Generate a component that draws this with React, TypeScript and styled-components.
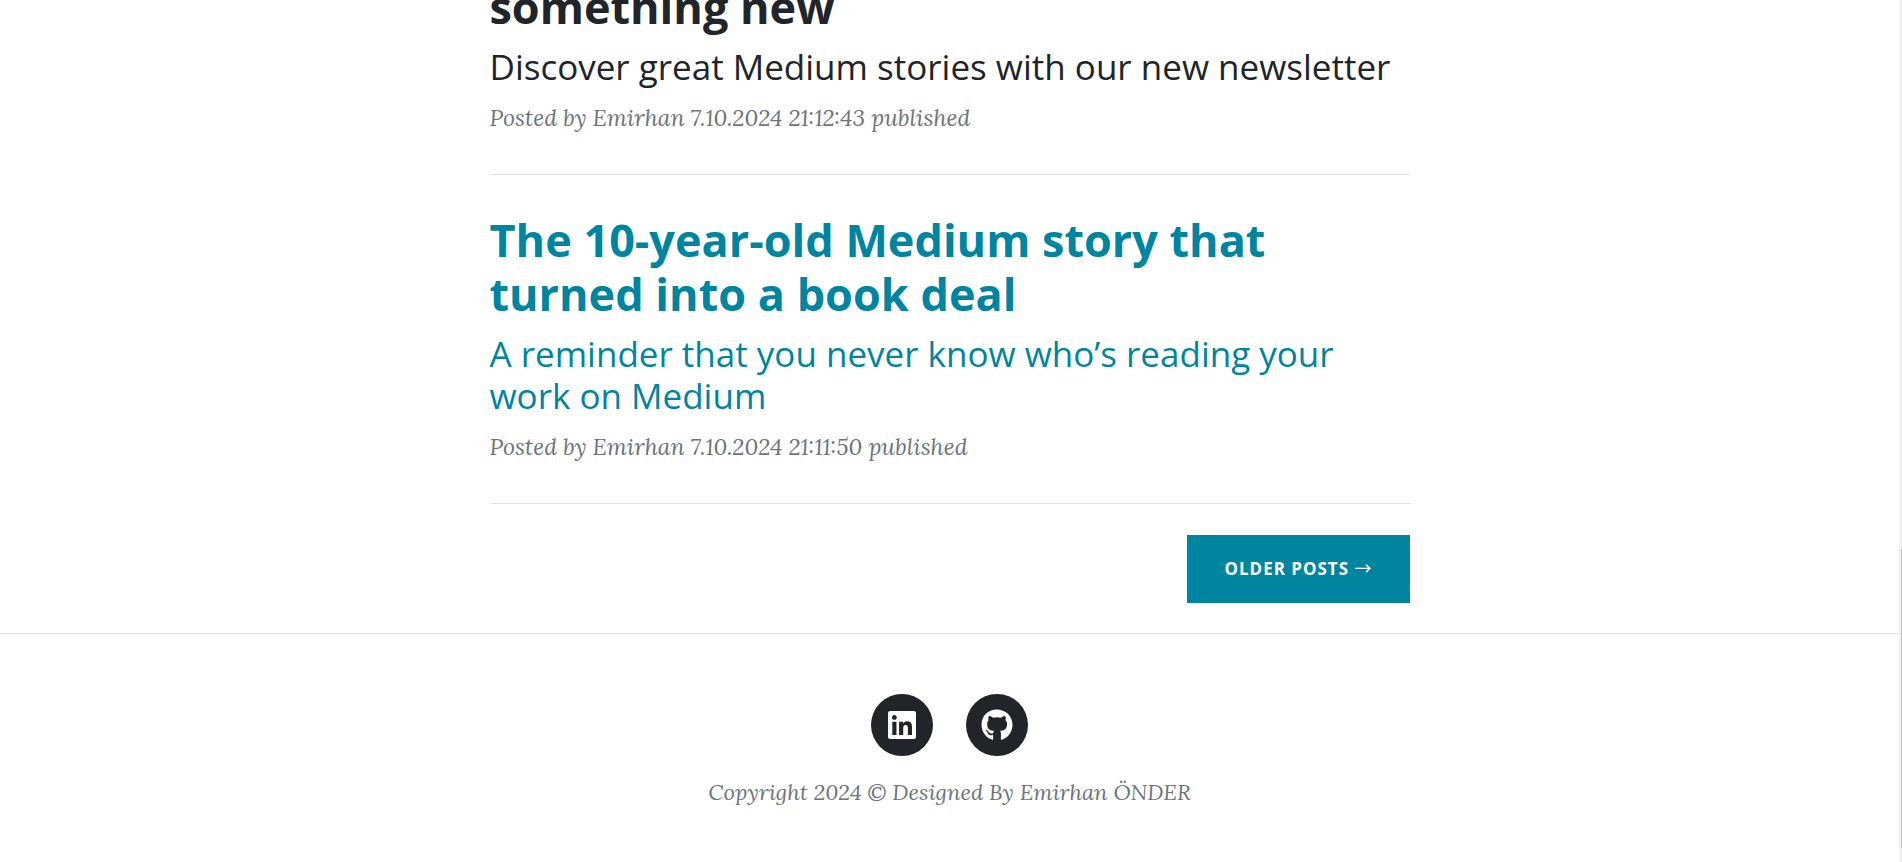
import React from "react";
import styled, { createGlobalStyle } from "styled-components";
import { FaGithub, FaLinkedin } from "react-icons/fa";

const sans = `"Open Sans", "Liberation Sans", sans-serif`;
const serif = `Lora, "Liberation Serif", serif`;

const GlobalStyle = createGlobalStyle`
  *, *::before, *::after { box-sizing: border-box; }
  body {
    margin: 0;
    background: #fff;
    color: #212529;
    font-family: ${serif};
    font-size: 22px;
    line-height: 36px;
  }
`;

const Shell = styled.div`
  display: grid;
  grid-template-columns: minmax(0, 1fr) 3px;
  min-height: 100vh;
  overflow: hidden;
`;

const Page = styled.div`
  display: flow-root;
`;

const ScrollRail = styled.div`
  display: flex;
  flex-direction: column;
  justify-content: flex-end;
  align-items: flex-end;
  padding-bottom: 14px;
  background: #f1f1f1;
`;

const ScrollThumb = styled.div`
  width: 1px;
  height: 299px;
  background: #c1c1c1;
`;

const Feed = styled.main`
  max-width: 920px;
  margin: -20px auto 30px;
`;

const Post = styled.article`
  padding-bottom: 38px;
  margin-bottom: 38px;
  border-bottom: 1px solid #dee2e6;

  &:last-of-type {
    margin-bottom: 31px;
  }
`;

const PostLink = styled.a<{ $active?: boolean }>`
  display: block;
  color: ${(p) => (p.$active ? "#0085a1" : "#212529")};
  text-decoration: none;
  font-family: ${sans};

  &:hover {
    color: #0085a1;
  }
`;

const PostTitle = styled.h2`
  margin: 0 0 12px;
  font-size: 45px;
  font-weight: 700;
  line-height: 54px;
`;

const PostSubtitle = styled.h3`
  margin: 0 0 12px;
  font-size: 35px;
  font-weight: 400;
  line-height: 42px;
`;

const Meta = styled.p`
  margin: 0;
  color: #6c757d;
  font-size: 23px;
  font-style: italic;
`;

const Copyright = styled(Meta)`
  font-size: 22px;
`;

const Pager = styled.div`
  display: flex;
  justify-content: flex-end;
`;

const PagerLink = styled.a`
  padding: 20px 37px;
  background: #0085a1;
  color: #fff;
  font-family: ${sans};
  font-size: 17px;
  font-weight: 700;
  line-height: 28px;
  letter-spacing: 1px;
  text-transform: uppercase;
  text-decoration: none;
`;

const Arrow = styled.span`
  font-family: "Noto Sans CJK JP", sans-serif;
  font-weight: 400;
  line-height: 1;
`;

const Footer = styled.footer`
  display: flex;
  flex-direction: column;
  align-items: center;
  gap: 18px;
  padding: 60px 0 50px;
  border-top: 1px solid #dee2e6;
`;

const SocialList = styled.ul`
  display: flex;
  gap: 33px;
  margin: 0;
  padding: 0;
  list-style: none;
`;

const SocialLink = styled.a`
  display: flex;
  align-items: center;
  justify-content: center;
  width: 62px;
  height: 62px;
  border-radius: 50%;
  background: #212529;
  color: #fff;
  font-size: 32px;
`;

type PostData = {
  title: string;
  subtitle: string;
  meta: string;
  active?: boolean;
};

const posts: PostData[] = [
  {
    title: "something new",
    subtitle: "Discover great Medium stories with our new newsletter",
    meta: "Posted by Emirhan 7.10.2024 21:12:43 published",
  },
  {
    title: "The 10-year-old Medium story that turned into a book deal",
    subtitle: "A reminder that you never know who’s reading your work on Medium",
    meta: "Posted by Emirhan 7.10.2024 21:11:50 published",
    active: true,
  },
];

export default function App() {
  return (
    <Shell>
      <GlobalStyle />
      <Page>
        <Feed>
          {posts.map((post) => (
            <Post key={post.title}>
              <PostLink href="#" $active={post.active}>
                <PostTitle>{post.title}</PostTitle>
                <PostSubtitle>{post.subtitle}</PostSubtitle>
              </PostLink>
              <Meta>{post.meta}</Meta>
            </Post>
          ))}
          <Pager>
            <PagerLink href="#">
              Older Posts <Arrow>→</Arrow>
            </PagerLink>
          </Pager>
        </Feed>
        <Footer>
          <SocialList>
            <li>
              <SocialLink href="#" aria-label="LinkedIn">
                <FaLinkedin />
              </SocialLink>
            </li>
            <li>
              <SocialLink href="#" aria-label="GitHub">
                <FaGithub />
              </SocialLink>
            </li>
          </SocialList>
          <Copyright>Copyright 2024 © Designed By Emirhan ÖNDER</Copyright>
        </Footer>
      </Page>
      <ScrollRail aria-hidden="true">
        <ScrollThumb />
      </ScrollRail>
    </Shell>
  );
}
